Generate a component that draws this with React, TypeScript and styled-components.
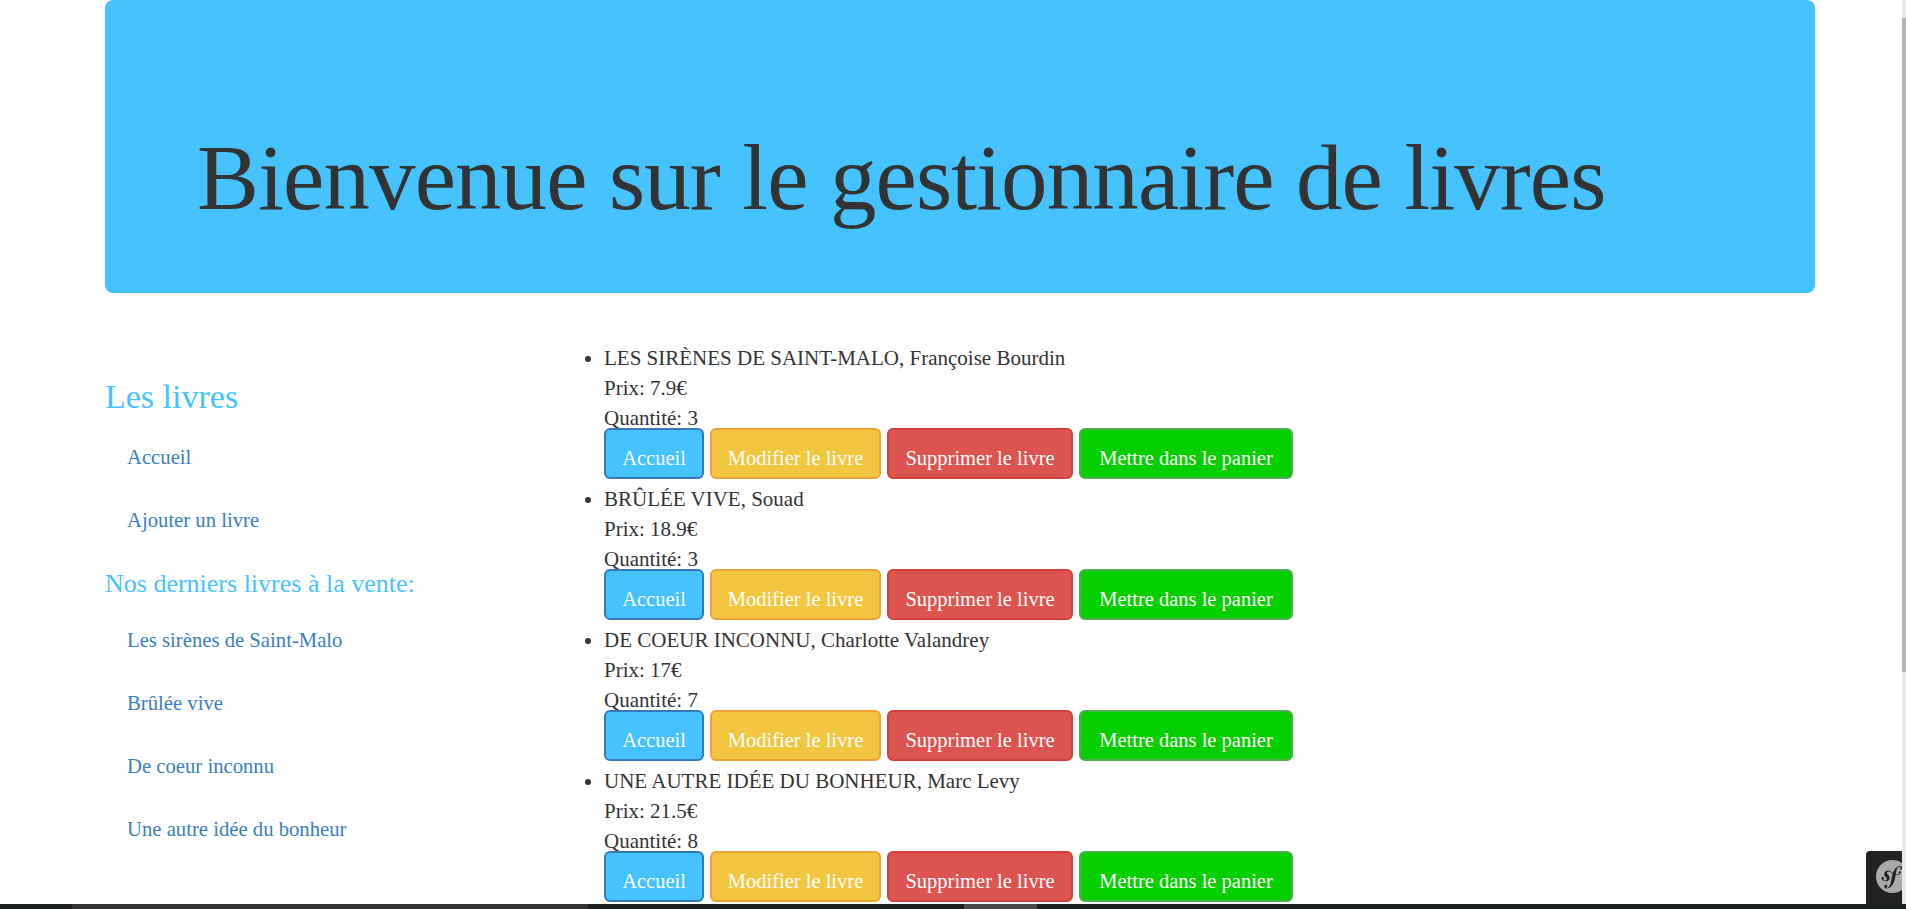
import React from "react";
import styled, { createGlobalStyle } from "styled-components";
import { SiSymfony } from "react-icons/si";

const Global = createGlobalStyle`
  html, body { margin: 0; padding: 0; height: 100%; background: #fff; overflow: hidden; }
  * { box-sizing: border-box; }
`;

const Shell = styled.div`
  height: 909px;
  display: flex;
  flex-direction: column;
  font-family: "Liberation Serif", serif;
  color: #333;
  position: relative;
`;
const Viewport = styled.div`
  flex: 1;
  min-height: 0;
  display: flex;
`;
const Page = styled.div`
  flex: 1;
  min-width: 0;
  overflow: hidden;
  padding: 0 87px 0 105px;
`;
const Jumbotron = styled.header`
  height: 293px;
  background: #46c3ff;
  border-radius: 8px;
  padding: 127px 0 0 92px;
`;
const Title = styled.h1`
  margin: 0;
  font-size: 93px;
  font-weight: 400;
  line-height: 1.1;
  letter-spacing: -0.9px;
  white-space: nowrap;
  color: #333;
`;
const Columns = styled.div`
  display: flex;
  padding-top: 51px;
`;
const Sidebar = styled.nav`
  width: 480px;
  flex: none;
  padding-top: 34px;
`;
const SideTitle = styled.h2`
  margin: 0 0 10px;
  font-size: 34px;
  font-weight: 400;
  line-height: 38px;
  color: #46c3ff;
`;
const SideSub = styled.h3`
  margin: 17px 0 11px;
  font-size: 26px;
  font-weight: 400;
  line-height: 29px;
  color: #46c3ff;
`;
const SideLink = styled.a`
  display: block;
  padding: 0 22px;
  height: 63px;
  line-height: 63px;
  font-size: 20.7px;
  color: #3a80c2;
`;
const BookList = styled.ul`
  margin: -1px 0 0;
  padding: 0 0 0 19px;
  list-style: disc;
`;
const Book = styled.li`
  font-size: 21px;
  line-height: 30px;
  height: 141px;
`;
const Line = styled.div``;
const Actions = styled.div`
  display: flex;
  gap: 6px;
  margin-top: -5px;
`;
const tones = {
  primary: { fill: "#46c3ff", edge: "#337ab7", width: 100 },
  warning: { fill: "#f3c63f", edge: "#eea236", width: 171 },
  danger: { fill: "#dc5450", edge: "#d43f3a", width: 186 },
  success: { fill: "#06cf00", edge: "#4cae4c", width: 214 },
} as const;
const ActionButton = styled.button<{ $tone: keyof typeof tones }>`
  width: ${(p) => tones[p.$tone].width}px;
  height: 51px;
  padding: 9px 0 0;
  border: 2px solid ${(p) => tones[p.$tone].edge};
  border-radius: 6px;
  background: ${(p) => tones[p.$tone].fill};
  color: #fff;
  font-family: inherit;
  font-size: 20.5px;
  white-space: nowrap;
`;
const Scrollbar = styled.div`
  width: 4px;
  flex: none;
  background: #e8e8e8;
  padding-top: 18px;
`;
const Thumb = styled.div`
  height: 654px;
  background: #b5b5b5;
`;
const BottomBar = styled.div`
  height: 5px;
  flex: none;
  display: grid;
  grid-template-columns: 72px 516px 376px 73px 1fr;
  background: #1c2020;
`;
const BarSegment = styled.div<{ $shade: string }>`
  background: ${(p) => p.$shade};
`;
const SymfonyBadge = styled.div`
  position: absolute;
  right: 4px;
  bottom: 5px;
  width: 36px;
  height: 53px;
  background: #222;
  border-top-left-radius: 4px;
  overflow: hidden;
  padding: 9px 0 0 10px;
  color: #aaa;
  svg {
    display: block;
    width: 33px;
    height: 33px;
  }
`;

const books = [
  { title: "LES SIRÈNES DE SAINT-MALO", author: "Françoise Bourdin", price: "7.9", qty: 3 },
  { title: "BRÛLÉE VIVE", author: "Souad", price: "18.9", qty: 3 },
  { title: "DE COEUR INCONNU", author: "Charlotte Valandrey", price: "17", qty: 7 },
  { title: "UNE AUTRE IDÉE DU BONHEUR", author: "Marc Levy", price: "21.5", qty: 8 },
];

export default function App() {
  return (
    <Shell>
      <Global />
      <Viewport>
        <Page>
          <Jumbotron>
            <Title>Bienvenue sur le gestionnaire de livres</Title>
          </Jumbotron>
          <Columns>
            <Sidebar>
              <SideTitle>Les livres</SideTitle>
              <SideLink>Accueil</SideLink>
              <SideLink>Ajouter un livre</SideLink>
              <SideSub>Nos derniers livres à la vente:</SideSub>
              <SideLink>Les sirènes de Saint-Malo</SideLink>
              <SideLink>Brûlée vive</SideLink>
              <SideLink>De coeur inconnu</SideLink>
              <SideLink>Une autre idée du bonheur</SideLink>
            </Sidebar>
            <BookList>
              {books.map((b) => (
                <Book key={b.title}>
                  <Line>{b.title}, {b.author}</Line>
                  <Line>Prix: {b.price}€</Line>
                  <Line>Quantité: {b.qty}</Line>
                  <Actions>
                    <ActionButton $tone="primary">Accueil</ActionButton>
                    <ActionButton $tone="warning">Modifier le livre</ActionButton>
                    <ActionButton $tone="danger">Supprimer le livre</ActionButton>
                    <ActionButton $tone="success">Mettre dans le panier</ActionButton>
                  </Actions>
                </Book>
              ))}
            </BookList>
          </Columns>
        </Page>
        <Scrollbar><Thumb /></Scrollbar>
      </Viewport>
      <BottomBar>
        <BarSegment $shade="#1c2020" />
        <BarSegment $shade="#333" />
        <BarSegment $shade="#1c2020" />
        <BarSegment $shade="#4a4a4a" />
        <BarSegment $shade="#1c2020" />
      </BottomBar>
      <SymfonyBadge>
        <SiSymfony />
      </SymfonyBadge>
    </Shell>
  );
}
